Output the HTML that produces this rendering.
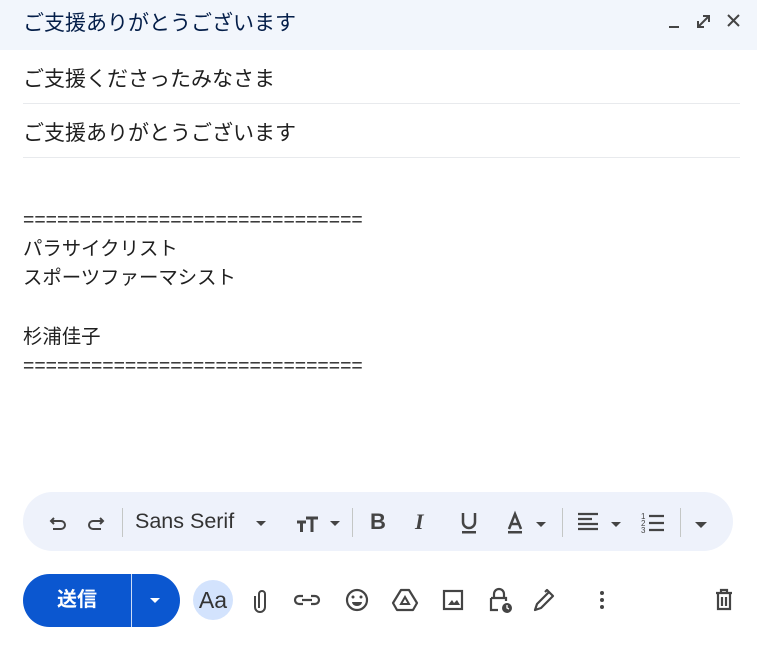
<!DOCTYPE html>
<html><head><meta charset="utf-8"><style>
*{margin:0;padding:0;box-sizing:border-box}
body{width:757px;height:646px;background:#fff;font-family:"Liberation Sans","Noto Sans CJK JP",sans-serif;color:#1f1f1f;position:relative;overflow:hidden}
.hdr{position:absolute;left:0;top:0;width:757px;height:50px;background:#f2f6fc}
.hdr .t{position:absolute;left:23px;top:7px;font-size:21px;color:#041e49}
.row{position:absolute;left:23px;width:717px;height:53px;border-bottom:1px solid #e8eaed;font-size:21px}
.row span{position:absolute;top:12px;left:0}
.body{position:absolute;left:23px;top:206px;font-size:19.4px;line-height:29.2px;white-space:pre}
.tb{position:absolute;left:23px;top:492px;width:710px;height:59px;background:#eef2fb;border-radius:30px}
.ab{position:absolute}
.sep{position:absolute;top:508px;width:1px;height:29px;background:#c4c7c5}
.send{position:absolute;left:23px;top:574px;width:157px;height:53px;background:#0b57d0;border-radius:27px}
.send .l{position:absolute;left:0;top:0;width:108px;height:53px;color:#fff;font-size:20px;font-weight:bold;text-align:center;line-height:53px}
.send .d{position:absolute;left:108px;top:0;width:1px;height:53px;background:#fff;opacity:.8}
svg{position:absolute}
</style></head><body>
<div class="hdr"><div class="t">ご支援ありがとうございます</div>
<svg style="left:664px;top:8px" width="84" height="24" viewBox="0 0 84 24"><rect x="5" y="18" width="10" height="2" fill="#444"/><path d="M34 19l11-11 M34 13v6h6 M39 8h6v6" stroke="#444" stroke-width="2" fill="none"/><path d="M64 7l11 11M75 7l-11 11" stroke="#444" stroke-width="2"/></svg>
</div>
<div class="row" style="top:51px"><span>ご支援くださったみなさま</span></div>
<div class="row" style="top:105px"><span>ご支援ありがとうございます</span></div>
<div class="body">==============================
パラサイクリスト
スポーツファーマシスト

杉浦佳子
==============================</div>
<div class="tb"></div>
<svg style="left:48px;top:510px" width="60" height="26" viewBox="0 0 60 26"><path d="M6 8l-3 3 3 3 M3 11h10a4 4 0 0 1 0 8h-8" stroke="#444" stroke-width="2" fill="none"/><path d="M52 8l3 3-3 3 M55 11h-10a4 4 0 0 0 0 8h8" stroke="#444" stroke-width="2" fill="none"/></svg>
<div class="sep" style="left:122px"></div>
<div class="ab" style="left:135px;top:509px;font-size:21.5px;color:#333">Sans Serif</div>
<svg style="left:250px;top:512px" width="100" height="24" viewBox="0 0 100 24"><path d="M6 9h10l-5 5z" fill="#444"/><path d="M80 9h10l-5 5z" fill="#444"/></svg>
<svg style="left:295px;top:512px" width="30" height="24"><path d="M2 10h9M6.5 10v10M11 6h12M17 6v14" stroke="#444" stroke-width="3"/></svg>
<div class="sep" style="left:352px"></div>
<div class="ab" style="left:370px;top:509px;font-size:22px;font-weight:bold;color:#444">B</div>
<div class="ab" style="left:415px;top:509px;font-size:22px;font-weight:bold;font-style:italic;color:#444;font-family:'Liberation Serif',serif">I</div>
<svg style="left:458px;top:509px" width="110" height="30"><path d="M5 4v9a6 6 0 0 0 12 0V4" stroke="#444" stroke-width="2.5" fill="none"/><rect x="4" y="22" width="14" height="2.5" fill="#444"/><path d="M51 20l6-15 6 15M53 15h8" stroke="#444" stroke-width="2.5" fill="none"/><rect x="50" y="22" width="14" height="2.5" fill="#444"/><path d="M78 13h10l-5 5z" fill="#444"/></svg>
<div class="sep" style="left:562px"></div>
<svg style="left:575px;top:510px" width="130" height="30"><path d="M3 4h20M3 9h14M3 14h20M3 19h20" stroke="#444" stroke-width="2.2"/><path d="M36 12h10l-5 5z" fill="#444"/><text x="66" y="9" font-size="8" fill="#444" font-family="Liberation Sans">1</text><text x="66" y="16" font-size="8" fill="#444" font-family="Liberation Sans">2</text><text x="66" y="23" font-size="8" fill="#444" font-family="Liberation Sans">3</text><path d="M74 6h15M74 13h15M74 20h15" stroke="#444" stroke-width="2.2"/></svg>
<div class="sep" style="left:680px"></div>
<svg style="left:690px;top:512px" width="24" height="24"><path d="M5 10h12l-6 6z" fill="#444"/></svg>
<div class="send"><div class="l">送信</div><div class="d"></div><svg style="left:118px;top:20px" width="30" height="14"><path d="M9 4h10l-5 5z" fill="#fff"/></svg></div>
<div class="ab" style="left:193px;top:580px;width:40px;height:40px;border-radius:50%;background:#d3e3fd;color:#333;font-size:23px;text-align:center;line-height:40px">Aa</div>
<svg style="left:245px;top:586px" width="500" height="30" viewBox="0 0 500 30"><path d="M12 22V8a3 3 0 0 1 6 0v13a5 5 0 0 1-10 0V10" stroke="#444" stroke-width="2" fill="none" transform="translate(2,0)"/>
<path d="M58 10h-4a4 4 0 0 0 0 8h4M66 10h4a4 4 0 0 1 0 8h-4M57 14h10" stroke="#444" stroke-width="2.2" fill="none"/>
<circle cx="112" cy="14" r="10" stroke="#444" stroke-width="2.2" fill="none"/><circle cx="108" cy="11" r="1.5" fill="#444"/><circle cx="116" cy="11" r="1.5" fill="#444"/><path d="M107 16a5 4 0 0 0 10 0z" fill="#444"/>
<path d="M156 4h8l8 13-4 7h-16l-4-7z" stroke="#444" stroke-width="2.2" fill="none" stroke-linejoin="round"/><path d="M160 11l4 7h-8z" stroke="#444" stroke-width="2" fill="none"/>
<rect x="199" y="5" width="18" height="18" stroke="#444" stroke-width="2.2" fill="none"/><path d="M203 19l4-5 2 3 3-3 3 5z" fill="#444"/>
<path d="M249 12V8a5 5 0 0 1 10 0v4M246 12h15v3M253 24h-7V12" stroke="#444" stroke-width="2.2" fill="none"/><circle cx="262" cy="22" r="5" fill="#444"/><path d="M262 19v3l2 1" stroke="#fff" stroke-width="1.3" fill="none"/>
<path d="M290 24l2-6 12-12 4 4-12 12zM300 6l2-2 4 4" stroke="#444" stroke-width="2.2" fill="none" stroke-linejoin="round"/>
<circle cx="357" cy="7" r="2" fill="#444"/><circle cx="357" cy="14" r="2" fill="#444"/><circle cx="357" cy="21" r="2" fill="#444"/>
<path d="M471 7h16M476 7V4h6v3M473 8v15h12V8M477 11v9M481 11v9" stroke="#444" stroke-width="2.2" fill="none"/></svg>
</body></html>
